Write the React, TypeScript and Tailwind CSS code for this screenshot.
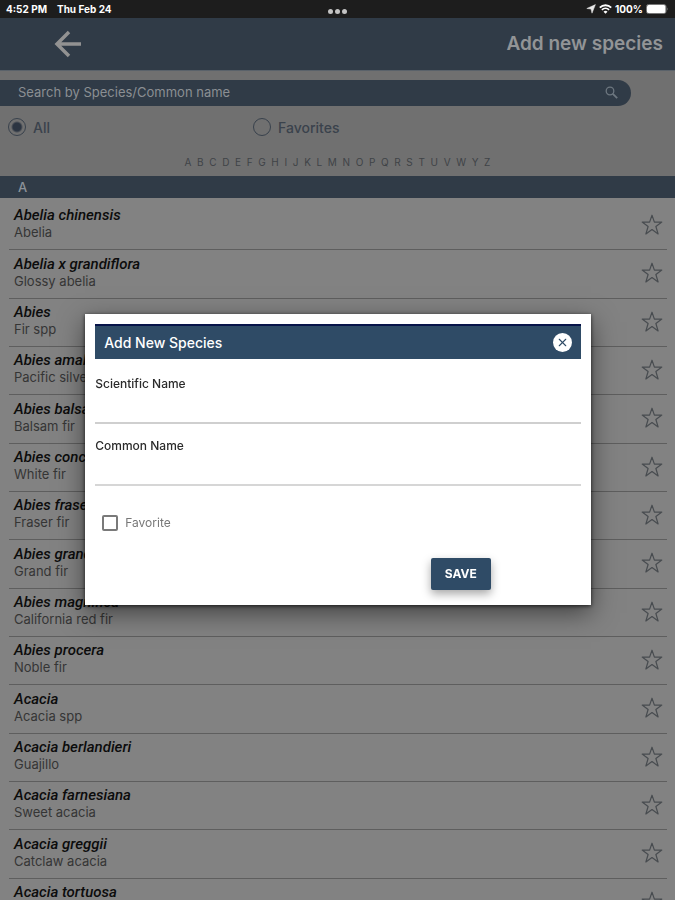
import { useState } from 'react'
import { X } from 'lucide-react'

type Species = { scientific: string; common: string }

const LETTERS = 'ABCDEFGHIJKLMNOPQRSTUVWYZ'.split('')

const SPECIES: Species[] = [
  { scientific: 'Abelia chinensis', common: 'Abelia' },
  { scientific: 'Abelia x grandiflora', common: 'Glossy abelia' },
  { scientific: 'Abies', common: 'Fir spp' },
  { scientific: 'Abies amabilis', common: 'Pacific silver fir' },
  { scientific: 'Abies balsamea', common: 'Balsam fir' },
  { scientific: 'Abies concolor', common: 'White fir' },
  { scientific: 'Abies fraseri', common: 'Fraser fir' },
  { scientific: 'Abies grandis', common: 'Grand fir' },
  { scientific: 'Abies magnifica', common: 'California red fir' },
  { scientific: 'Abies procera', common: 'Noble fir' },
  { scientific: 'Acacia', common: 'Acacia spp' },
  { scientific: 'Acacia berlandieri', common: 'Guajillo' },
  { scientific: 'Acacia farnesiana', common: 'Sweet acacia' },
  { scientific: 'Acacia greggii', common: 'Catclaw acacia' },
  { scientific: 'Acacia tortuosa', common: 'Twisted acacia' },
]

function StatusBar() {
  return (
    <div className="grid h-[18px] shrink-0 grid-cols-3 items-center bg-[#1d1d1d] px-1.5 text-[10px] font-bold text-white">
      <div className="flex gap-2.5 whitespace-nowrap">
        <span>4:52 PM</span>
        <span>Thu Feb 24</span>
      </div>
      <div className="flex justify-center gap-0.5 pt-1">
        <span className="size-[5px] rounded-full bg-[#c4c4c4]" />
        <span className="size-[5px] rounded-full bg-[#c4c4c4]" />
        <span className="size-[5px] rounded-full bg-[#c4c4c4]" />
      </div>
      <div className="flex items-center justify-end gap-[3px]">
        <svg width="10" height="10" viewBox="0 0 10 10" aria-hidden="true">
          <path d="M9.400.6 6 9.200 5 5 .8 4.500Z" fill="#e8e8e8" stroke="#e8e8e8" strokeWidth=".5" strokeLinejoin="round" />
        </svg>
        <svg width="13" height="10" viewBox="0 0 13 10" fill="none" stroke="#fff" aria-hidden="true">
          <path d="M.8 3.6a8.2 8.2 0 0 1 11.4 0" strokeWidth="1.9" />
          <path d="M2.9 5.9a5.2 5.2 0 0 1 7.2 0" strokeWidth="1.7" />
          <path d="M6.5 9.8 4.500 7.700a3 3 0 0 1 4 0Z" fill="#fff" stroke="none" />
        </svg>
        <span>100%</span>
        <svg width="23" height="10" viewBox="0 0 23 10" aria-hidden="true">
          <rect x=".5" y=".5" width="19.5" height="9" rx="2" fill="none" stroke="#777" />
          <rect x="1" y="1" width="18.5" height="8" rx="1.5" fill="#fff" />
          <path d="M21 3.2q1.6 1.8 0 3.6Z" fill="#777" />
        </svg>
      </div>
    </div>
  )
}

function SpeciesRow({ species }: { species: Species }) {
  return (
    <li className="flex h-12 shrink-0 items-center justify-between border-b border-[#5e5e5e] pr-1 pb-1 pl-[5px] nth-[3n+2]:h-[49px]">
      <div>
        <div className="font-['Roboto','Liberation_Sans',sans-serif] text-[15px] leading-[18px] font-medium text-[#0c0c0c] italic">
          {species.scientific}
        </div>
        <div className="text-[13px] leading-[17px] text-[#353535]">{species.common}</div>
      </div>
      <button type="button" aria-label={`Favorite ${species.scientific}`} className="pt-0.5">
        <svg
          width="22"
          height="22"
          viewBox="0 0 22 22"
          fill="none"
          stroke="#484c50"
          strokeWidth="1.2"
          strokeLinejoin="round"
          aria-hidden="true"
        >
          <path d="m11 1.200 2.400 6.900h7.400l-5.900 4.400 2.200 7.500-6.100-4.400L4.900 20l2.200-7.500L1.200 8.100h7.400Z" />
        </svg>
      </button>
    </li>
  )
}

function AddSpeciesDialog({ onClose }: { onClose: () => void }) {
  return (
    <div className="fixed inset-x-0 top-[19px] bottom-0 flex items-center justify-center pl-px">
      <form
        role="dialog"
        aria-labelledby="dialog-title"
        onSubmit={(e) => e.preventDefault()}
        className="flex w-3/4 flex-col bg-white px-2.5 pt-2.5 pb-[15px] shadow-[0_8px_24px_rgba(0,0,0,0.5),0_1px_4px_rgba(0,0,0,0.7)]"
      >
        <div className="flex h-[35px] items-center justify-between border-t-2 border-[#071449] bg-[#2f4b66] px-[9px]">
          <h2 id="dialog-title" className="text-[14px] font-medium text-white">
            Add New Species
          </h2>
          <button
            type="button"
            aria-label="Close"
            onClick={onClose}
            className="flex size-[19px] items-center justify-center rounded-full bg-white text-[#2f4b66]"
          >
            <X size={13} strokeWidth={2} />
          </button>
        </div>

        <label htmlFor="scientific" className="pt-4 text-[12px] leading-[18px] font-medium text-[#2b2b2b]">
          Scientific Name
        </label>
        <input id="scientific" className="h-[31px] border-b-2 border-[#cfcfcf] text-[14px] outline-none" />

        <label htmlFor="common" className="pt-[13px] text-[12px] leading-[18px] font-medium text-[#2b2b2b]">
          Common Name
        </label>
        <input id="common" className="h-[31px] border-b-2 border-[#d6d6d6] text-[14px] outline-none" />

        <label className="flex items-center gap-[7px] self-start pt-7 pl-[7px] text-[12px] leading-[18px] text-[#777]">
          <input type="checkbox" className="size-4 appearance-none rounded-xs border-2 border-[#7a7a7a] checked:bg-[#2f4b66]" />
          Favorite
        </label>

        <button
          type="submit"
          className="mt-[26px] mr-[90px] h-8 w-[60px] self-end rounded-xs bg-[#2f4b66] text-[12px] font-bold text-white shadow-[0_4px_10px_rgba(0,0,0,0.35)]"
        >
          SAVE
        </button>
      </form>
    </div>
  )
}

export default function App() {
  const [filter, setFilter] = useState('all')
  const [open, setOpen] = useState(true)

  const radio =
    'size-[18px] appearance-none rounded-full border border-[#38414c] checked:bg-[radial-gradient(circle,#2c3542_4px,transparent_6px)]'

  return (
    <div className="flex h-screen flex-col overflow-hidden bg-[#707070] font-['Inter','Liberation_Sans',sans-serif]">
      <StatusBar />

      <header className="flex h-[53px] shrink-0 items-center justify-between border-b border-[#5a626a] bg-[#303b47] pr-3 pl-[54px]">
        <button type="button" aria-label="Back">
          <svg width="28" height="28" viewBox="0 0 28 28" fill="none" stroke="#929292" strokeWidth="3.5" aria-hidden="true">
            <path d="M27 14H3M15 2 3 14 15 26" />
          </svg>
        </button>
        <h1 className="text-[19px] font-semibold text-[#929496]">Add new species</h1>
      </header>

      <div className="mt-[9px] mr-11 flex h-[26px] shrink-0 items-center rounded-r-full bg-[#303b47] pr-[13px] pb-px pl-[18px]">
        <input
          type="search"
          aria-label="Search species"
          placeholder="Search by Species/Common name"
          className="min-w-0 flex-1 text-[13px] text-[#8b8f93] outline-none placeholder:text-[#8b8f93]"
        />
        <svg width="13" height="13" viewBox="0 0 13 13" fill="none" stroke="#6d7780" aria-hidden="true">
          <circle cx="5" cy="5" r="3.8" strokeWidth="1.3" />
          <path d="m7.800 7.800 4.400 4.400" strokeWidth="1.8" />
        </svg>
      </div>

      <div className="grid h-[43px] shrink-0 grid-cols-[245px_1fr] items-center pb-px pl-2 text-[14px] font-medium text-[#3a424c]">
        <label className="flex items-center gap-[7px]">
          <input type="radio" name="filter" checked={filter === 'all'} onChange={() => setFilter('all')} className={radio} />
          All
        </label>
        <label className="flex items-center gap-[7px]">
          <input
            type="radio"
            name="filter"
            checked={filter === 'favorites'}
            onChange={() => setFilter('favorites')}
            className={radio}
          />
          Favorites
        </label>
      </div>

      <nav className="mx-auto flex h-[27px] w-[306px] shrink-0 items-center justify-between text-[10px] text-[#3f4347]">
        {LETTERS.map((letter) => (
          <a key={letter} href={`#${letter}`}>
            {letter}
          </a>
        ))}
      </nav>

      <h2 id="A" className="h-[22px] shrink-0 bg-[#303b47] pl-[18px] text-[13px] leading-[22px] font-medium text-[#8b9299]">
        A
      </h2>

      <ul className="flex min-h-0 flex-1 flex-col overflow-hidden bg-[#828282] pt-1 pr-2 pl-[9px]">
        {SPECIES.map((species) => (
          <SpeciesRow key={species.scientific} species={species} />
        ))}
      </ul>

      {open && <AddSpeciesDialog onClose={() => setOpen(false)} />}
    </div>
  )
}
